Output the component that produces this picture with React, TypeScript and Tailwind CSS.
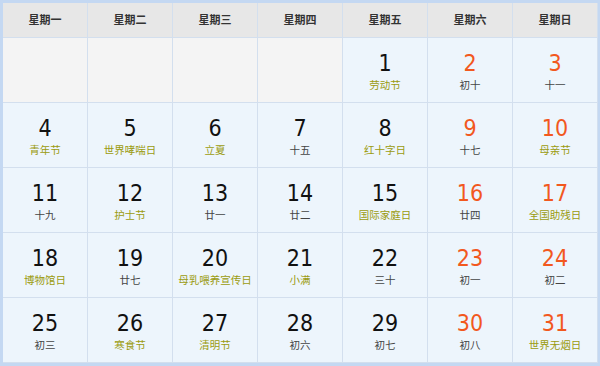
import React from "react";

type Day = { d: number; l: string; f?: boolean; w?: boolean };

const weeks: (Day | null)[][] = [
  [null, null, null, null, { d: 1, l: "劳动节", f: true }, { d: 2, l: "初十", w: true }, { d: 3, l: "十一", w: true }],
  [
    { d: 4, l: "青年节", f: true },
    { d: 5, l: "世界哮喘日", f: true },
    { d: 6, l: "立夏", f: true },
    { d: 7, l: "十五" },
    { d: 8, l: "红十字日", f: true },
    { d: 9, l: "十七", w: true },
    { d: 10, l: "母亲节", f: true, w: true },
  ],
  [
    { d: 11, l: "十九" },
    { d: 12, l: "护士节", f: true },
    { d: 13, l: "廿一" },
    { d: 14, l: "廿二" },
    { d: 15, l: "国际家庭日", f: true },
    { d: 16, l: "廿四", w: true },
    { d: 17, l: "全国助残日", f: true, w: true },
  ],
  [
    { d: 18, l: "博物馆日", f: true },
    { d: 19, l: "廿七" },
    { d: 20, l: "母乳喂养宣传日", f: true },
    { d: 21, l: "小满", f: true },
    { d: 22, l: "三十" },
    { d: 23, l: "初一", w: true },
    { d: 24, l: "初二", w: true },
  ],
  [
    { d: 25, l: "初三" },
    { d: 26, l: "寒食节", f: true },
    { d: 27, l: "清明节", f: true },
    { d: 28, l: "初六" },
    { d: 29, l: "初七" },
    { d: 30, l: "初八", w: true },
    { d: 31, l: "世界无烟日", f: true, w: true },
  ],
];

const heads = ["星期一", "星期二", "星期三", "星期四", "星期五", "星期六", "星期日"];

export default function App() {
  return (
    <div className="w-[600px] h-[366px] bg-white">
      <div className="w-[600px] h-[366px] border-l-[3px] border-t-[3px] border-r-[2px] border-b-[3px] border-[#c4d8f2] box-border">
        <div className="grid grid-cols-[repeat(7,85px)] grid-rows-[35px_repeat(5,65px)]">
          {heads.map((h) => (
            <div
              key={h}
              className="flex items-center justify-center bg-[#e7e7e7] border-r border-b border-[#d3dfee] text-[11px] font-bold text-[#333] pb-[1px]"
              style={{ fontFamily: '"Noto Sans CJK SC", sans-serif' }}
            >
              {h}
            </div>
          ))}
          {weeks.flat().map((c, i) =>
            c === null ? (
              <div key={i} className="bg-[#f4f4f4] border-r border-b border-[#d3dfee]" />
            ) : (
              <div key={i} className="bg-[#edf5fc] border-r border-b border-[#d3dfee] flex flex-col items-center pt-[12px]">
                <div
                  className={`text-[23px] leading-[26px] ${c.w ? "text-[#f2581e]" : "text-[#111]"}`}
                  style={{ fontFamily: '"DejaVu Sans Condensed", "DejaVu Sans", sans-serif' }}
                >
                  {c.d}
                </div>
                <div
                  className={`mt-[2px] text-[10.5px] leading-[14px] ${c.f ? "text-[#9b9b0f]" : "text-[#444]"}`}
                  style={{ fontFamily: '"Noto Sans CJK SC", sans-serif' }}
                >
                  {c.l}
                </div>
              </div>
            )
          )}
        </div>
      </div>
    </div>
  );
}
